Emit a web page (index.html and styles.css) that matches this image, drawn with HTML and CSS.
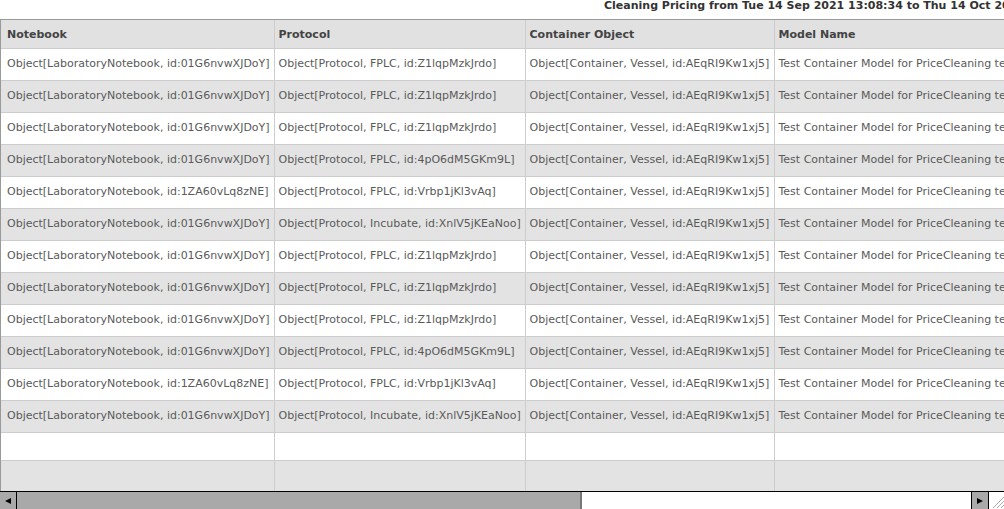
FILE: index.html
```html
<!DOCTYPE html>
<html>
<head>
<meta charset="utf-8">
<link rel="stylesheet" href="styles.css">
</head>
<body>
<div class="page">
  <div class="title">Cleaning Pricing from Tue 14 Sep 2021 13:08:34 to Thu 14 Oct 2021 13:08:34</div>
  <div class="grid-wrap">
    <table class="grid">
      <colgroup>
        <col class="c1"><col class="c2"><col class="c3"><col class="c4">
      </colgroup>
      <thead>
        <tr><th>Notebook</th><th>Protocol</th><th>Container Object</th><th>Model Name</th></tr>
      </thead>
      <tbody>
        <tr><td>Object[LaboratoryNotebook, id:01G6nvwXJDoY]</td><td>Object[Protocol, FPLC, id:Z1lqpMzkJrdo]</td><td>Object[Container, Vessel, id:AEqRI9Kw1xj5]</td><td>Test Container Model for PriceCleaning tests</td></tr>
        <tr class="alt"><td>Object[LaboratoryNotebook, id:01G6nvwXJDoY]</td><td>Object[Protocol, FPLC, id:Z1lqpMzkJrdo]</td><td>Object[Container, Vessel, id:AEqRI9Kw1xj5]</td><td>Test Container Model for PriceCleaning tests</td></tr>
        <tr><td>Object[LaboratoryNotebook, id:01G6nvwXJDoY]</td><td>Object[Protocol, FPLC, id:Z1lqpMzkJrdo]</td><td>Object[Container, Vessel, id:AEqRI9Kw1xj5]</td><td>Test Container Model for PriceCleaning tests</td></tr>
        <tr class="alt"><td>Object[LaboratoryNotebook, id:01G6nvwXJDoY]</td><td>Object[Protocol, FPLC, id:4pO6dM5GKm9L]</td><td>Object[Container, Vessel, id:AEqRI9Kw1xj5]</td><td>Test Container Model for PriceCleaning tests</td></tr>
        <tr><td>Object[LaboratoryNotebook, id:1ZA60vLq8zNE]</td><td>Object[Protocol, FPLC, id:Vrbp1jKl3vAq]</td><td>Object[Container, Vessel, id:AEqRI9Kw1xj5]</td><td>Test Container Model for PriceCleaning tests</td></tr>
        <tr class="alt"><td>Object[LaboratoryNotebook, id:01G6nvwXJDoY]</td><td>Object[Protocol, Incubate, id:XnlV5jKEaNoo]</td><td>Object[Container, Vessel, id:AEqRI9Kw1xj5]</td><td>Test Container Model for PriceCleaning tests</td></tr>
        <tr><td>Object[LaboratoryNotebook, id:01G6nvwXJDoY]</td><td>Object[Protocol, FPLC, id:Z1lqpMzkJrdo]</td><td>Object[Container, Vessel, id:AEqRI9Kw1xj5]</td><td>Test Container Model for PriceCleaning tests</td></tr>
        <tr class="alt"><td>Object[LaboratoryNotebook, id:01G6nvwXJDoY]</td><td>Object[Protocol, FPLC, id:Z1lqpMzkJrdo]</td><td>Object[Container, Vessel, id:AEqRI9Kw1xj5]</td><td>Test Container Model for PriceCleaning tests</td></tr>
        <tr><td>Object[LaboratoryNotebook, id:01G6nvwXJDoY]</td><td>Object[Protocol, FPLC, id:Z1lqpMzkJrdo]</td><td>Object[Container, Vessel, id:AEqRI9Kw1xj5]</td><td>Test Container Model for PriceCleaning tests</td></tr>
        <tr class="alt"><td>Object[LaboratoryNotebook, id:01G6nvwXJDoY]</td><td>Object[Protocol, FPLC, id:4pO6dM5GKm9L]</td><td>Object[Container, Vessel, id:AEqRI9Kw1xj5]</td><td>Test Container Model for PriceCleaning tests</td></tr>
        <tr><td>Object[LaboratoryNotebook, id:1ZA60vLq8zNE]</td><td>Object[Protocol, FPLC, id:Vrbp1jKl3vAq]</td><td>Object[Container, Vessel, id:AEqRI9Kw1xj5]</td><td>Test Container Model for PriceCleaning tests</td></tr>
        <tr class="alt"><td>Object[LaboratoryNotebook, id:01G6nvwXJDoY]</td><td>Object[Protocol, Incubate, id:XnlV5jKEaNoo]</td><td>Object[Container, Vessel, id:AEqRI9Kw1xj5]</td><td>Test Container Model for PriceCleaning tests</td></tr>
        <tr class="empty1"><td></td><td></td><td></td><td></td></tr>
        <tr class="alt empty2"><td></td><td></td><td></td><td></td></tr>
      </tbody>
    </table>
  </div>
  <div class="hscroll">
    <div class="btn btn-left"><svg width="8" height="8" viewBox="0 0 8 8"><path d="M1 4 L7 1 L7 7 Z" fill="#000"/></svg></div>
    <div class="thumb"></div>
    <div class="track"></div>
    <div class="btn btn-right"><svg width="8" height="8" viewBox="0 0 8 8"><path d="M7 4 L1 1 L1 7 Z" fill="#000"/></svg></div>
    <div class="grip"><svg width="16" height="17" viewBox="0 0 16 17"><path d="M15 5 L4 16 M15 9 L8 16 M15 13 L12 16" stroke="#aaa" stroke-width="1"/></svg></div>
  </div>
</div>
</body>
</html>
```

FILE: styles.css
```css
html, body {
  margin: 0;
  padding: 0;
  background: #fff;
}
.page {
  width: 1004px;
  height: 509px;
  overflow: hidden;
  display: flex;
  flex-direction: column;
  font-family: "DejaVu Sans", sans-serif;
  font-size: 11px;
}
.title {
  height: 19px;
  line-height: 12px;
  padding-left: 604px;
  font-weight: bold;
  color: #333;
  white-space: nowrap;
  overflow: hidden;
  flex: none;
}
.grid-wrap {
  flex: none;
  height: 471px;
  overflow: hidden;
  border-top: 1px solid #9a9a9a;
  border-left: 1px solid #9a9a9a;
}
.grid {
  border-collapse: collapse;
  table-layout: fixed;
  width: 1299px;
}
.c1 { width: 273px; }
.c2 { width: 251px; }
.c3 { width: 249px; }
.c4 { width: 526px; }
.grid th, .grid td {
  text-align: left;
  white-space: nowrap;
  overflow: hidden;
  padding: 0 0 0 4px;
  border-right: 1px solid #cdcdcd;
  border-bottom: 1px solid #cdcdcd;
}
.grid th:first-child, .grid td:first-child {
  padding-left: 6px;
}
.grid thead tr {
  height: 28px;
  background: #e1e1e1;
}
.grid th {
  font-weight: bold;
  color: #444;
  padding-top: 2px;
}
.grid td {
  color: #5a5a5a;
  height: 29px;
  padding-bottom: 2px;
}
.grid tr.alt {
  background: #e3e3e3;
}
.grid tr.empty1 td {
  height: 25px;
}
.hscroll {
  flex: none;
  height: 17px;
  display: flex;
  border-top: 1px solid #000;
  border-bottom: 1px solid #000;
}
.btn {
  width: 16px;
  background: #a9a9a9;
  display: flex;
  align-items: center;
  justify-content: center;
  flex: none;
}
.btn-left {
  border-right: 1px solid #000;
}
.btn-right {
  border-left: 1px solid #000;
  border-right: 1px solid #000;
}
.thumb {
  width: 563px;
  background: #a9a9a9;
  border-right: 2px solid #777;
  flex: none;
}
.track {
  flex: 1;
  background: #fff;
}
.grip {
  width: 15px;
  background: #fff;
  flex: none;
}
.grip svg {
  display: block;
}
```
